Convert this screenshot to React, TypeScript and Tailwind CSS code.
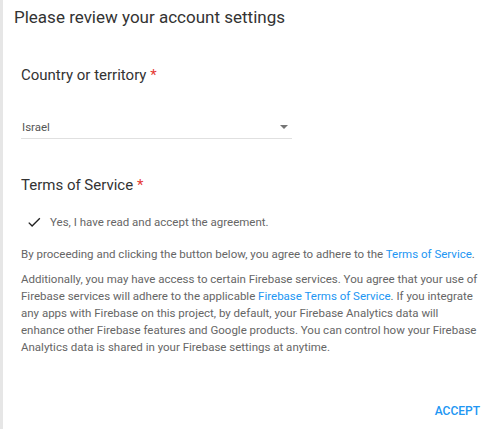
export default function App() {
  return (
    <div className="h-[429px] w-[496px] bg-white font-['Roboto',sans-serif] border-l-[3px] border-[#e6e6e6] overflow-hidden">
      <div className="pl-[11px] pr-4 pt-[5px]">
        <h1 className="text-[17px] leading-[24px] text-[#333]">Please review your account settings</h1>
      </div>
      <div className="pl-[18px] pr-[18px]">
        <h2 className="mt-[36px] text-[15px] leading-[20px] text-[#333]">
          Country or territory <span className="text-[#e53935]">*</span>
        </h2>
        <div className="mt-[34px] flex w-[271px] items-center justify-between border-b border-[#e0e0e0] pb-[3px] pl-[1px]">
          <span className="text-[11.5px] leading-[16px] text-[#555]">Israel</span>
          <svg width="8" height="4" viewBox="0 0 10 5" className="mr-[4px]">
            <path d="M0 0h10L5 5z" fill="#757575" />
          </svg>
        </div>
        <h2 className="mt-[36px] text-[15px] leading-[20px] text-[#333]">
          Terms of Service <span className="text-[#e53935]">*</span>
        </h2>
        <div className="mt-[19px] flex items-center pl-[7px]">
          <svg width="13" height="11" viewBox="3 5 19 15" className="mr-[9px]">
            <path d="M9 16.2 4.8 12l-1.4 1.4L9 19 21 7l-1.4-1.4z" fill="#212121" />
          </svg>
          <span className="text-[11.5px] leading-[16px] text-[#666]">Yes, I have read and accept the agreement.</span>
        </div>
        <p className="mt-[16px] text-[11.5px] leading-[17px] text-[#666]">
          By proceeding and clicking the button below, you agree to adhere to the{" "}
          <span className="text-[#2196f3]">Terms of Service</span>.
        </p>
        <p className="mt-[8px] text-[11.5px] leading-[17px] text-[#666]">
          Additionally, you may have access to certain Firebase services. You agree that your use of Firebase services will adhere to the applicable{" "}
          <span className="text-[#2196f3]">Firebase Terms of Service</span>. If you integrate any apps with Firebase on this project, by default, your Firebase Analytics data will enhance other Firebase features and Google products. You can control how your Firebase Analytics data is shared in your Firebase settings at anytime.
        </p>
      </div>
      <div className="mt-[47px] flex justify-end pr-[16px]">
        <button className="text-[12px] font-medium leading-[16px] text-[#2196f3]">ACCEPT</button>
      </div>
    </div>
  );
}
